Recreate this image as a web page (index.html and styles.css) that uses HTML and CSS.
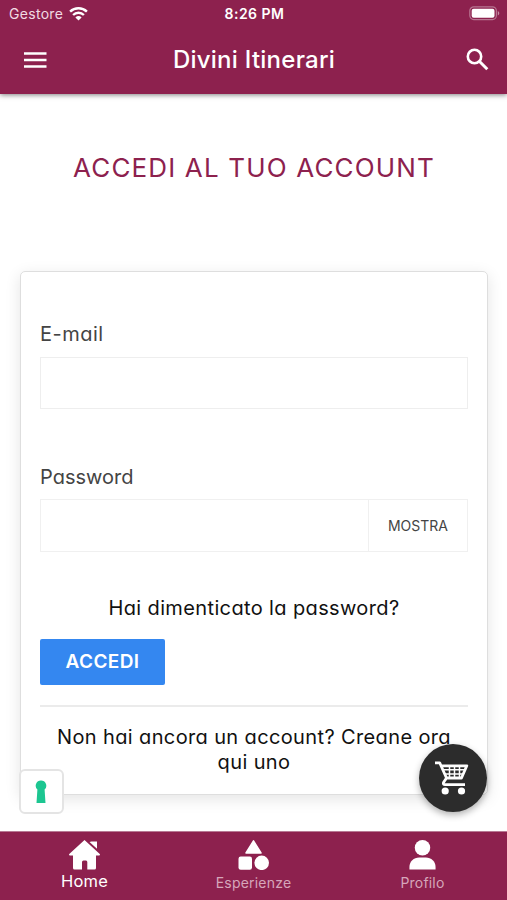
FILE: index.html
```html
<!DOCTYPE html>
<html lang="it">
<head>
<meta charset="utf-8">
<title>Divini Itinerari</title>
<link rel="stylesheet" href="styles.css">
</head>
<body>
<div class="app">
  <header class="header">
    <div class="status">
      <div class="carrier"><span>Gestore</span>
        <svg width="19" height="14" viewBox="0 0 19 14" fill="none" stroke="#fff" stroke-width="2.4"><path d="M1.1 4.7a12 12 0 0 1 16.8 0M4.1 8a7.7 7.7 0 0 1 10.8 0"/><path d="M6.4 10.4a4.5 4.5 0 0 1 6.2 0L9.5 13.6z" fill="#fff" stroke="none"/></svg>
      </div>
      <div class="clock">8:26 PM</div>
      <svg class="battery" width="31" height="15" viewBox="0 0 31 15"><rect x=".8" y=".8" width="26.6" height="12.8" rx="4" fill="none" stroke="#b77591" stroke-width="1.2"/><rect x="2.7" y="2.7" width="22.8" height="9" rx="2" fill="#fff"/><path d="M28.8 5c2 1 2 3.500 0 4.500z" fill="#c58ca4"/></svg>
    </div>
    <div class="toolbar">
      <svg class="menu" width="24" height="18" viewBox="0 0 24 18"><path d="M0 2.500h22.500M0 9h22.500M0 15.500h22.500" stroke="#fff" stroke-width="2.500"/></svg>
      <h1 class="title">Divini Itinerari</h1>
      <svg class="search" width="23" height="23" viewBox="0 0 23 23" fill="none" stroke="#fff" stroke-width="2.600"><circle cx="8.500" cy="8.500" r="6.700"/><path d="M13.300 13.300l8 8" stroke-width="3"/></svg>
    </div>
  </header>
  <main class="content">
    <h2 class="heading">ACCEDI AL TUO ACCOUNT</h2>
    <form class="card">
      <label class="label email-label" for="email">E-mail</label>
      <input class="field" id="email" type="email">
      <label class="label password-label" for="password">Password</label>
      <div class="password"><input class="secret" id="password" type="password"><button class="show" type="button"><span>MOSTRA</span></button></div>
      <a class="forgot">Hai dimenticato la password?</a>
      <button class="submit" type="button"><span>ACCEDI</span></button>
      <hr class="rule">
      <a class="register">Non hai ancora un account? Creane ora<br>qui uno</a>
    </form>
  </main>
  <nav class="tabs">
    <a class="tab active"><svg width="31" height="30" viewBox="0 0 31 30" fill="#fff"><path d="M15.500 0L31 14.300Q31 15.500 30 15.500H27V28Q27 29.500 25.500 29.500H18.300V22Q18.300 20.500 17 20.500H14.500Q13 20.500 13 22V29.500H5.500Q4 29.500 4 28V15.500H1Q0 15.500 0 14.300z"/><path d="M20.500 2Q21.500 1.500 22.500 1.500H28V8.800z"/></svg><span>Home</span></a>
    <a class="tab"><svg width="31" height="30" viewBox="0 0 31 30" fill="#fff"><path d="M15.500.8L23 13H8z" stroke="#fff" stroke-width="1.500" stroke-linejoin="round"/><rect x=".5" y="16.500" width="13.500" height="13.300" rx="2.200"/><circle cx="23.700" cy="22.800" r="7.300"/></svg><span>Esperienze</span></a>
    <a class="tab"><svg width="31" height="31" viewBox="0 0 31 31" fill="#fff"><circle cx="15.500" cy="8" r="8"/><path d="M2 30.500V28C2 22 6.500 18 12 18H19C24.500 18 29 22 29 28V30.500z"/></svg><span>Profilo</span></a>
  </nav>
  <div class="privacy"><svg width="12" height="24" viewBox="0 0 12 24"><path d="M6 .5a5.200 5.200 0 0 0-3.600 9L1.500 23h9L9.600 9.500A5.200 5.200 0 0 0 6 .5z" fill="#1cc691"/></svg></div>
  <div class="cart"><svg width="34" height="34" viewBox="0 0 34 34" fill="none" stroke="#fff" stroke-width="2.800"><path d="M0 1.800H4.700L11.500 17H26.500L31.800 4.800H6.500M11.500 17L8.500 21.500Q8 23.700 10 23.700H30" stroke-linejoin="round"/><path d="M8.500 8.800h22M10 13h18M14.500 5v12M19.500 5v12M24.500 5v12" stroke-width="1.500"/><g fill="#fff" stroke="none"><circle cx="10.200" cy="30" r="3.600"/><circle cx="26.500" cy="30" r="3.600"/></g></svg></div>
</div>
</body>
</html>
```
FILE: styles.css
```css
* { box-sizing: border-box; }
body { margin: 0; font-family: Inter, "Liberation Sans", sans-serif; background: #fff; }
.app { width: 507px; height: 900px; display: flex; flex-direction: column; position: relative; overflow: hidden; }
.header { height: 94px; flex: none; background: #8d214e; color: #fff; box-shadow: 0 1px 5px rgba(0,0,0,.5); }
.status { height: 27px; display: grid; grid-template-columns: 1fr 1fr 1fr; align-items: center; padding: 0 7px 0 9px; }
.carrier { display: flex; align-items: center; gap: 6px; font-size: 14px; letter-spacing: .3px; color: #f1dbe4; }
.clock { text-align: center; font-size: 14px; font-weight: 600; letter-spacing: .5px; }
.battery { justify-self: end; }
.toolbar { height: 67px; display: flex; align-items: center; justify-content: space-between; padding: 0 18px 2px 24px; }
.title { margin: 0; font-size: 24px; font-weight: 500; letter-spacing: .25px; line-height: 30px; position: relative; left: -3px; }
.content { flex: 1; padding: 55px 19px 0 20px; }
.heading { margin: 0 0 85px; height: 37px; line-height: 37px; text-align: center; font-size: 26px; font-weight: 400; letter-spacing: 1.15px; color: #8d214e; white-space: nowrap; }
.card { height: 524px; padding: 47px 19px 0; display: flex; flex-direction: column; border: 1px solid #dedede; border-radius: 5px; box-shadow: 0 4px 16px rgba(0,0,0,.11); font-feature-settings: "cv11"; }
.label { height: 30px; line-height: 30px; font-size: 20px; color: #444; align-self: flex-start; }
.email-label { letter-spacing: .5px; }
.field { margin: 8px 0 53px; width: 428px; height: 52px; flex: none; border: 1px solid #eee; outline: 0; padding: 0 12px; background: #fff; }
.password { display: flex; width: 428px; height: 53px; margin-top: 7px; border: 1px solid #f0f0f0; }
.secret { flex: 1; min-width: 0; border: 0; padding: 0 12px; outline: 0; background: #fff; }
.show { width: 99px; border: 0; border-left: 1px solid #f0f0f0; padding: 0; background: #fff; color: #444; font: 14px Inter, sans-serif; }
.forgot { margin-top: 41px; height: 30px; line-height: 30px; text-align: center; font-size: 20px; letter-spacing: .37px; color: #111; white-space: nowrap; }
.submit { width: 125px; height: 46px; margin-top: 16px; padding: 0 0 2px; border: 0; border-radius: 2px; background: #3487f0; color: #fff; font: 600 19px Inter, sans-serif; letter-spacing: .4px; }
.rule { width: 428px; height: 2px; margin: 20px 0 18px; border: 0; background: #ebebeb; }
.register { text-align: center; font-size: 20px; letter-spacing: .37px; line-height: 25px; color: #111; white-space: nowrap; }
.tabs { flex: none; height: 69px; background: #8d214e; border-top: 1px solid #b77a94; display: grid; grid-template-columns: repeat(3, 1fr); color: #d6a6ba; }
.tab { display: flex; flex-direction: column; align-items: center; padding-top: 8px; font-size: 14px; letter-spacing: .2px; line-height: 25px; }
.tab svg { height: 30px; }
.active { color: #fff; font-size: 16.500px; line-height: 22px; }
.privacy { position: absolute; left: 19px; top: 769px; width: 45px; height: 45px; display: flex; align-items: center; justify-content: center; border: 2px solid #e4e4e4; border-radius: 6px; background: #fff; }
.privacy svg { margin-right: 1px; }
.cart { position: absolute; left: 419px; top: 744px; width: 68px; height: 68px; display: flex; align-items: center; justify-content: center; border-radius: 50%; background: #2c2c2c; box-shadow: 0 3px 7px rgba(0,0,0,.3); }
.cart svg { margin-right: 3px; }
```
